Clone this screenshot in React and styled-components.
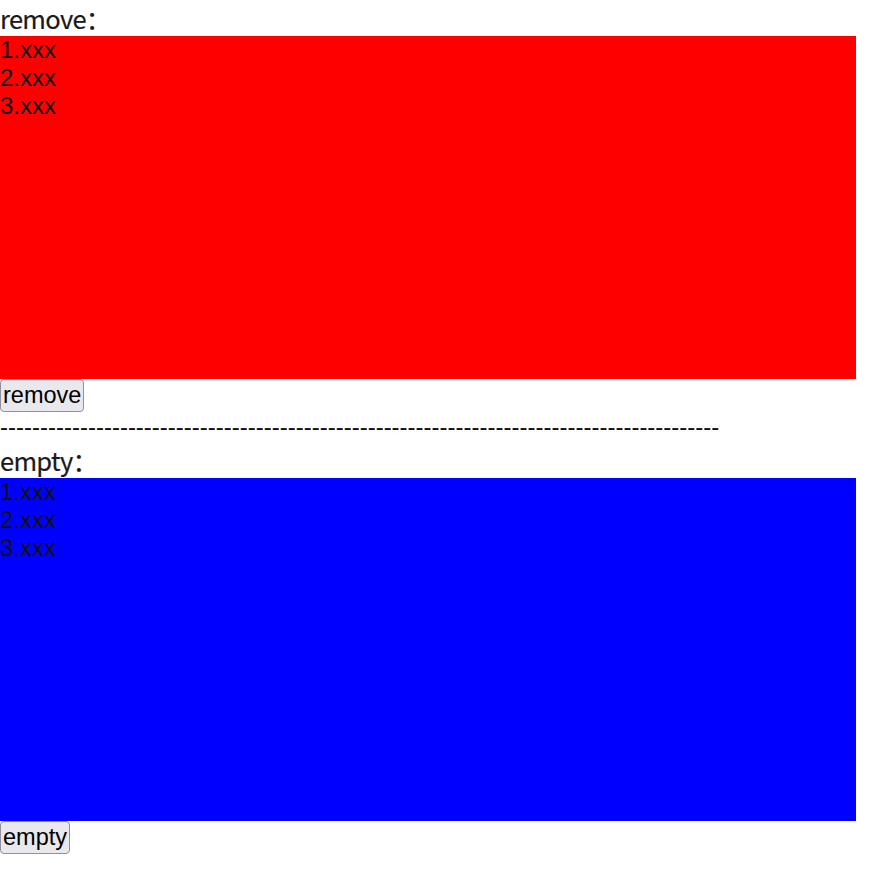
import React from "react";
import styled, { createGlobalStyle } from "styled-components";

const Global = createGlobalStyle`
  html, body { margin: 0; padding: 0; background: #fff; }
  body { font-family: "Liberation Sans", Arial, sans-serif; color: #000; }
`;

const Page = styled.div`
  display: flex;
  flex-direction: column;
  align-items: flex-start;
`;

const Title = styled.div`
  font-family: "Noto Sans CJK SC", "Liberation Sans", sans-serif;
  font-size: 25.5px;
  letter-spacing: -0.7px;
  line-height: 36px;
  height: 36px;
  color: #1a1a1a;
  -webkit-text-stroke: 0.2px #1a1a1a;
`;

const Box = styled.ul`
  list-style: none;
  margin: 0;
  padding: 0;
  width: 856px;
  height: 343px;
  background: ${(p) => p.$color};
  font-size: 24px;
  line-height: 28px;
  color: #111;
`;

const Button = styled.button`
  box-sizing: border-box;
  height: 33px;
  margin: 0;
  padding: 0 2px;
  font-family: "Liberation Sans", Arial, sans-serif;
  font-size: 23.5px;
  color: #000;
  background: #e9e9ed;
  border: 1px solid #8f8f9d;
  border-radius: 4px;
`;

const Divider = styled.div`
  font-size: 24px;
  line-height: 30px;
  color: #111;
  white-space: nowrap;
`;

const items = ["1.xxx", "2.xxx", "3.xxx"];

function Section({ label, color, button }) {
  return (
    <>
      <Title>{label}：</Title>
      <Box $color={color}>
        {items.map((t) => (
          <li key={t}>{t}</li>
        ))}
      </Box>
      <Button>{button}</Button>
    </>
  );
}

export default function App() {
  return (
    <Page>
      <Global />
      <Section label="remove" color="#ff0000" button="remove" />
      <Divider>{"-".repeat(90)}</Divider>
      <Section label="empty" color="#0000ff" button="empty" />
    </Page>
  );
}
